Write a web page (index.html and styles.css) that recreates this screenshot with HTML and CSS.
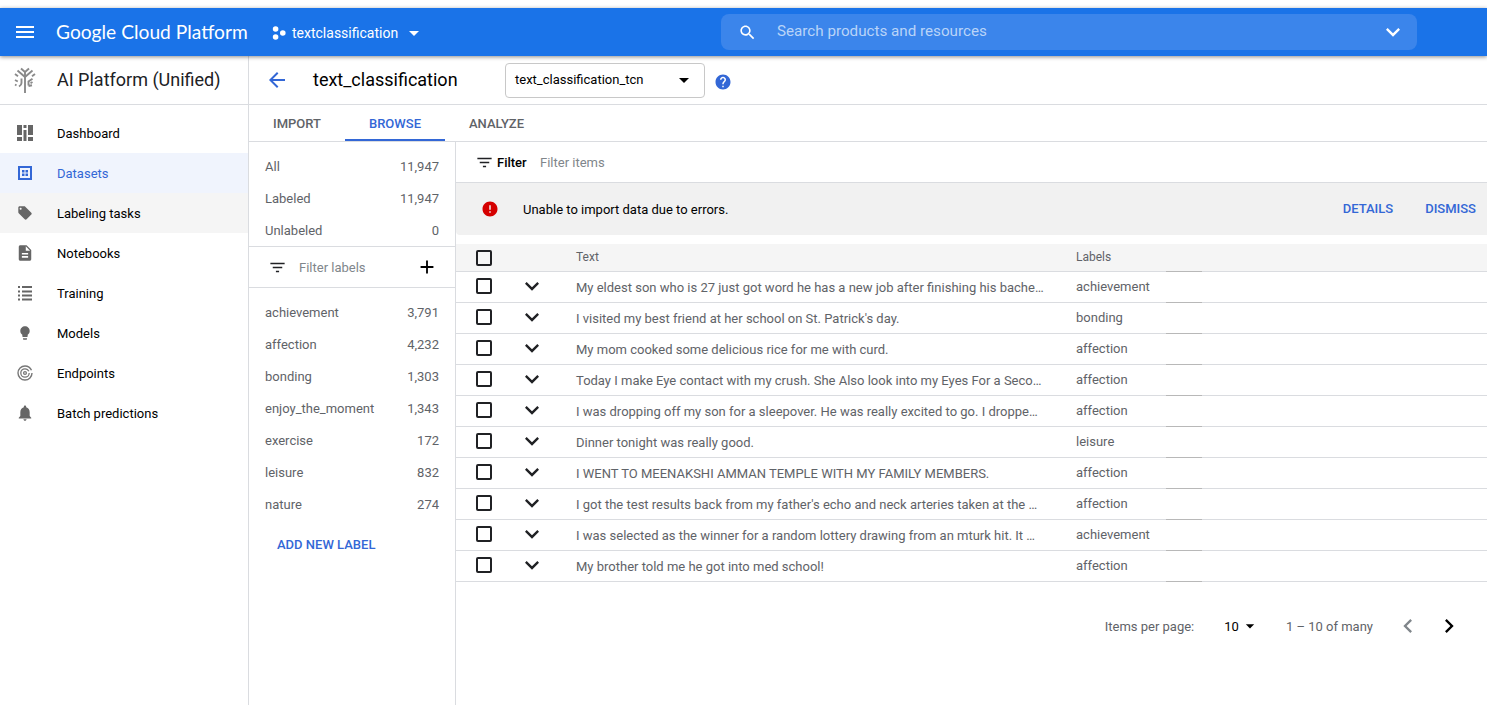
FILE: index.html
```html
<!DOCTYPE html>
<html lang="en">
<head>
<meta charset="utf-8">
<title>AI Platform (Unified)</title>
<link rel="stylesheet" href="styles.css">
</head>
<body>
<svg class="sprite" aria-hidden="true">
<symbol id="i-menu" viewBox="0 0 24 24"><path d="M3 18h18v-2H3v2zm0-5h18v-2H3v2zm0-7v2h18V6H3z"/></symbol>
<symbol id="i-back" viewBox="0 0 24 24"><path d="M20 11H7.83l5.59-5.59L12 4l-8 8 8 8 1.41-1.41L7.83 13H20v-2z"/></symbol>
<symbol id="i-drop" viewBox="0 0 24 24"><path d="M7 10l5 5 5-5z"/></symbol>
<symbol id="i-search" viewBox="0 0 24 24"><path d="M15.5 14h-.79l-.28-.27C15.41 12.59 16 11.11 16 9.5 16 5.91 13.09 3 9.5 3S3 5.91 3 9.5 5.91 16 9.5 16c1.61 0 3.09-.59 4.23-1.57l.27.28v.79l5 4.99L20.49 19l-4.99-5zm-6 0C7.01 14 5 11.99 5 9.5S7.01 5 9.5 5 14 7.01 14 9.5 11.99 14 9.5 14z"/></symbol>
<symbol id="i-help" viewBox="0 0 24 24"><path d="M12 2C6.48 2 2 6.48 2 12s4.48 10 10 10 10-4.48 10-10S17.52 2 12 2zm1 17h-2v-2h2v2zm2.07-7.75l-.9.92C13.45 12.9 13 13.5 13 15h-2v-.5c0-1.1.45-2.1 1.17-2.83l1.24-1.26c.37-.36.59-.86.59-1.41 0-1.1-.9-2-2-2s-2 .9-2 2H8c0-2.21 1.79-4 4-4s4 1.79 4 4c0 .88-.36 1.68-.93 2.25z"/></symbol>
<symbol id="i-filter" viewBox="0 0 24 24"><path d="M10 18h4v-2h-4v2zM3 6v2h18V6H3zm3 7h12v-2H6v2z"/></symbol>
<symbol id="i-add" viewBox="0 0 24 24"><path d="M19 13h-6v6h-2v-6H5v-2h6V5h2v6h6v2z"/></symbol>
<symbol id="i-error" viewBox="0 0 24 24"><path d="M12 2C6.48 2 2 6.48 2 12s4.48 10 10 10 10-4.48 10-10S17.52 2 12 2zm1 15h-2v-2h2v2zm0-4h-2V7h2v6z"/></symbol>
<symbol id="i-more" viewBox="0 0 24 24"><path d="M16.59 8.59L12 13.17 7.41 8.59 6 10l6 6 6-6z"/></symbol>
<symbol id="i-left" viewBox="0 0 24 24"><path d="M15.41 7.41L14 6l-6 6 6 6 1.41-1.41L10.83 12z"/></symbol>
<symbol id="i-right" viewBox="0 0 24 24"><path d="M10 6L8.59 7.41 13.17 12l-4.58 4.59L10 18l6-6z"/></symbol>
</svg>

<header class="topbar">
  <svg class="top-menu"><use href="#i-menu"/></svg>
  <span class="brand">Google Cloud Platform</span>
  <div class="project">
    <svg class="project-dots" viewBox="0 0 14 14"><circle cx="3.6" cy="3" r="2.8"/><circle cx="3.6" cy="11" r="2.8"/><circle cx="10.8" cy="7" r="2.8"/></svg>
    <span>textclassification</span>
    <svg class="project-drop"><use href="#i-drop"/></svg>
  </div>
  <div class="search">
    <svg class="search-icon"><use href="#i-search"/></svg>
    <span class="search-text">Search products and resources</span>
    <svg class="search-more"><use href="#i-more"/></svg>
  </div>
</header>

<div class="shell">
  <aside class="sidebar">
    <div class="side-head">
      <svg class="side-logo" viewBox="0 0 22 27" fill="none" stroke="#8a8a8a" stroke-width="1.9">
        <path d="M11 5v22M11 6L7 2.500M11 6l4-3.500M11 11L3.500 4.500M11 11l7.500-6.500M1 8l3 2.200M21 8l-3 2.200"/>
        <path d="M7.500 12.500v4.500q0 2-2.500 3.500M1 14l2.800 1.500M1 18.500l1.500.8M14.500 19.500v-4l4-2.800M18.500 16l-2 1.200M14.500 20l3.500-.8"/>
      </svg>
      <span>AI Platform (Unified)</span>
    </div>
    <nav class="side-nav">
      <a class="nav-item">
        <svg class="nav-icon" viewBox="0 0 24 24"><path d="M4 4h5v10H4zM4 16h5v4H4zM10.500 4h3v3h-3zM10.500 9h3v11h-3zM15 4h5v10h-5zM15 16h5v4h-5z"/></svg>
        <span>Dashboard</span>
      </a>
      <a class="nav-item is-active">
        <svg class="nav-icon" viewBox="0 0 24 24"><path fill-rule="evenodd" d="M5 5h14v14H5zM7 7v10h10V7zM9 9h2.500v2.500H9zM12.500 9H15v2.500h-2.500zM9 12.500h2.500V15H9zM12.500 12.500H15V15h-2.500z"/></svg>
        <span>Datasets</span>
      </a>
      <a class="nav-item is-hover">
        <svg class="nav-icon icon-s" viewBox="0 0 24 24"><path d="M21.41 11.58l-9-9C12.05 2.22 11.55 2 11 2H4c-1.1 0-2 .9-2 2v7c0 .55.22 1.05.59 1.42l9 9c.36.36.86.58 1.41.58.55 0 1.05-.22 1.41-.59l7-7c.37-.36.59-.86.59-1.41 0-.55-.23-1.06-.59-1.42zM5.500 7C4.670 7 4 6.330 4 5.500S4.670 4 5.500 4 7 4.670 7 5.500 6.330 7 5.500 7z"/></svg>
        <span>Labeling tasks</span>
      </a>
      <a class="nav-item">
        <svg class="nav-icon icon-m" viewBox="0 0 24 24"><path d="M14 2H6c-1.1 0-1.99.9-1.99 2L4 20c0 1.1.89 2 1.99 2H18c1.1 0 2-.9 2-2V8l-6-6zm2 16H8v-2h8v2zm0-4H8v-2h8v2zm-3-5V3.500L18.500 9H13z"/></svg>
        <span>Notebooks</span>
      </a>
      <a class="nav-item">
        <svg class="nav-icon" viewBox="0 0 24 24"><path d="M5 5h2v2H5zM9 5h10v2H9zM5 9.500h2v2H5zM9 9.500h10v2H9zM5 13.500h2v2H5zM9 13.500h10v2H9zM5 17.500h2v2H5zM9 17.500h10v2H9z"/></svg>
        <span>Training</span>
      </a>
      <a class="nav-item">
        <svg class="nav-icon icon-s" viewBox="0 0 24 24"><path d="M9 21c0 .55.45 1 1 1h4c.55 0 1-.45 1-1v-1H9v1zm3-19C8.140 2 5 5.140 5 9c0 2.380 1.190 4.470 3 5.740V17c0 .55.45 1 1 1h6c.55 0 1-.45 1-1v-2.260c1.810-1.270 3-3.360 3-5.740 0-3.860-3.140-7-7-7z"/></svg>
        <span>Models</span>
      </a>
      <a class="nav-item">
        <svg class="nav-icon ring" viewBox="0 0 24 24"><circle cx="12" cy="12" r="7" stroke-width="1.400" stroke-dasharray="41 3"/><circle cx="12" cy="12" r="4.200" stroke-width="1.300" stroke-dasharray="24 2.400"/><circle cx="12" cy="12" r="1.400" stroke-width="1.300"/></svg>
        <span>Endpoints</span>
      </a>
      <a class="nav-item">
        <svg class="nav-icon icon-m" viewBox="0 0 24 24"><path d="M12 22c1.1 0 2-.9 2-2h-4c0 1.1.89 2 2 2zm6-6v-5c0-3.07-1.64-5.64-4.5-6.32V4c0-.83-.67-1.5-1.5-1.5s-1.5.67-1.5 1.5v.68C7.630 5.360 6 7.920 6 11v5l-2 2v1h16v-1l-2-2z"/></svg>
        <span>Batch predictions</span>
      </a>
    </nav>
  </aside>

  <main class="content">
    <div class="title-row">
      <svg class="back"><use href="#i-back"/></svg>
      <h1 class="title">text_classification</h1>
      <div class="select">
        <span>text_classification_tcn</span>
        <svg class="select-drop"><use href="#i-drop"/></svg>
      </div>
      <svg class="help"><use href="#i-help"/></svg>
    </div>

    <div class="tabs">
      <span class="tab">IMPORT</span>
      <span class="tab is-current">BROWSE</span>
      <span class="tab">ANALYZE</span>
    </div>

    <div class="browse">
      <section class="facets">
        <div class="facet-group stats">
          <div class="facet"><span>All</span><span>11,947</span></div>
          <div class="facet"><span>Labeled</span><span>11,947</span></div>
          <div class="facet"><span>Unlabeled</span><span>0</span></div>
        </div>
        <div class="label-filter">
          <svg class="lf-icon"><use href="#i-filter"/></svg>
          <span class="lf-text">Filter labels</span>
          <svg class="lf-add"><use href="#i-add"/></svg>
        </div>
        <div class="facet-group labels">
          <div class="facet"><span>achievement</span><span>3,791</span></div>
          <div class="facet"><span>affection</span><span>4,232</span></div>
          <div class="facet"><span>bonding</span><span>1,303</span></div>
          <div class="facet"><span>enjoy_the_moment</span><span>1,343</span></div>
          <div class="facet"><span>exercise</span><span>172</span></div>
          <div class="facet"><span>leisure</span><span>832</span></div>
          <div class="facet"><span>nature</span><span>274</span></div>
        </div>
        <a class="add-label">ADD NEW LABEL</a>
      </section>

      <section class="items">
        <div class="filter-row">
          <svg class="fr-icon"><use href="#i-filter"/></svg>
          <span class="fr-label">Filter</span>
          <span class="fr-text">Filter items</span>
        </div>
        <div class="banner">
          <svg class="banner-icon"><use href="#i-error"/></svg>
          <span class="banner-text">Unable to import data due to errors.</span>
          <a class="banner-link">DETAILS</a>
          <a class="banner-link">DISMISS</a>
        </div>
        <div class="table">
          <div class="row row-head">
            <span class="cell-check"><i class="box"></i></span>
            <span class="cell-exp"></span>
            <span class="cell-text">Text</span>
            <span class="cell-label">Labels</span>
            <span class="cell-grip"></span>
          </div>
          <div class="row"><span class="cell-check"><i class="box"></i></span><span class="cell-exp"><svg class="exp"><use href="#i-more"/></svg></span><span class="cell-text">My eldest son who is 27 just got word he has a new job after finishing his bache…</span><span class="cell-label">achievement</span><span class="cell-grip"></span></div>
          <div class="row"><span class="cell-check"><i class="box"></i></span><span class="cell-exp"><svg class="exp"><use href="#i-more"/></svg></span><span class="cell-text">I visited my best friend at her school on St. Patrick's day.</span><span class="cell-label">bonding</span><span class="cell-grip"></span></div>
          <div class="row"><span class="cell-check"><i class="box"></i></span><span class="cell-exp"><svg class="exp"><use href="#i-more"/></svg></span><span class="cell-text">My mom cooked some delicious rice for me with curd.</span><span class="cell-label">affection</span><span class="cell-grip"></span></div>
          <div class="row"><span class="cell-check"><i class="box"></i></span><span class="cell-exp"><svg class="exp"><use href="#i-more"/></svg></span><span class="cell-text">Today I make Eye contact with my crush. She Also look into my Eyes For a Seco…</span><span class="cell-label">affection</span><span class="cell-grip"></span></div>
          <div class="row"><span class="cell-check"><i class="box"></i></span><span class="cell-exp"><svg class="exp"><use href="#i-more"/></svg></span><span class="cell-text">I was dropping off my son for a sleepover. He was really excited to go. I droppe…</span><span class="cell-label">affection</span><span class="cell-grip"></span></div>
          <div class="row"><span class="cell-check"><i class="box"></i></span><span class="cell-exp"><svg class="exp"><use href="#i-more"/></svg></span><span class="cell-text">Dinner tonight was really good.</span><span class="cell-label">leisure</span><span class="cell-grip"></span></div>
          <div class="row"><span class="cell-check"><i class="box"></i></span><span class="cell-exp"><svg class="exp"><use href="#i-more"/></svg></span><span class="cell-text">I WENT TO MEENAKSHI AMMAN TEMPLE WITH MY FAMILY MEMBERS.</span><span class="cell-label">affection</span><span class="cell-grip"></span></div>
          <div class="row"><span class="cell-check"><i class="box"></i></span><span class="cell-exp"><svg class="exp"><use href="#i-more"/></svg></span><span class="cell-text">I got the test results back from my father's echo and neck arteries taken at the …</span><span class="cell-label">affection</span><span class="cell-grip"></span></div>
          <div class="row"><span class="cell-check"><i class="box"></i></span><span class="cell-exp"><svg class="exp"><use href="#i-more"/></svg></span><span class="cell-text">I was selected as the winner for a random lottery drawing from an mturk hit. It …</span><span class="cell-label">achievement</span><span class="cell-grip"></span></div>
          <div class="row"><span class="cell-check"><i class="box"></i></span><span class="cell-exp"><svg class="exp"><use href="#i-more"/></svg></span><span class="cell-text">My brother told me he got into med school!</span><span class="cell-label">affection</span><span class="cell-grip"></span></div>
        </div>
        <div class="pager">
          <span class="pg-label">Items per page:</span>
          <span class="pg-size">10</span>
          <svg class="pg-drop"><use href="#i-drop"/></svg>
          <span class="pg-range">1 – 10 of many</span>
          <svg class="pg-prev"><use href="#i-left"/></svg>
          <svg class="pg-next"><use href="#i-right"/></svg>
        </div>
      </section>
    </div>
  </main>
</div>
</body>
</html>
```

FILE: styles.css
```css
* { box-sizing: border-box; }
html, body { margin: 0; height: 705px; overflow: hidden; }
body {
  padding-top: 8px;
  background: #fff;
  color: #202124;
  font-family: Roboto, "Liberation Sans", sans-serif;
  font-size: 13px;
}
.sprite { display: none; }
svg { display: block; flex: none; }

/* top bar */
.topbar {
  position: relative;
  z-index: 2;
  display: flex;
  align-items: center;
  height: 48px;
  background: #1a73e8;
  color: #fff;
  box-shadow: 0 1px 4px rgba(0, 0, 0, .45);
  fill: #fff;
}
.top-menu { width: 24px; height: 24px; margin-left: 13px; }
.brand { width: 216px; margin-left: 19px; padding-bottom: 2px; font-family: Lato, Roboto, sans-serif; font-size: 19.2px; white-space: nowrap; }
.project { display: flex; align-items: center; width: 449px; padding-top: 2px; font-size: 14px; }
.project-dots { width: 14px; height: 14px; margin-right: 6px; }
.project-drop { width: 24px; height: 24px; margin-left: 4px; }
.search {
  display: flex;
  align-items: center;
  width: 696px;
  height: 36px;
  border-radius: 8px;
  background: #3b85eb;
}
.search-icon { width: 19px; height: 19px; margin-left: 17px; }
.search-text { flex: 1; margin-left: 20px; padding-bottom: 2px; font-size: 15.2px; color: #b9d4f8; }
.search-more { width: 28px; height: 28px; margin-right: 10px; }

/* shell */
.shell { display: flex; height: 649px; }
.sidebar { flex: none; width: 249px; border-right: 1px solid #dadce0; }
.side-head {
  display: flex;
  align-items: center;
  height: 49px;
  padding-bottom: 2px;
  border-bottom: 1px solid #dadce0;
  font-size: 18px;
  color: #202124;
}
.side-logo { width: 22px; height: 27px; margin: 1px 21px 0 14px; }
.side-nav { padding-top: 8px; }
.nav-item {
  display: flex;
  align-items: center;
  height: 40px;
  padding-left: 13px;
  color: #000;
  fill: #666;
}
.nav-icon { width: 24px; height: 24px; margin-right: 20px; }
.icon-s { transform: scale(.67); }
.icon-m { transform: scale(.78); }
.ring { fill: none; stroke: #777; }
.is-active { background: #f0f4fd; color: #3367d6; fill: #3367d6; }
.is-hover { background: #f5f5f5; }

/* content */
.content { flex: 1; min-width: 0; }
.title-row {
  display: flex;
  align-items: center;
  height: 49px;
  border-bottom: 1px solid #dadce0;
}
.back { width: 24px; height: 24px; margin-left: 16px; fill: #3367d6; }
.title { width: 192px; margin: 0 0 0 24px; padding-bottom: 2px; font-size: 18px; font-weight: 400; color: #000; }
.select {
  display: flex;
  align-items: center;
  justify-content: space-between;
  width: 200px;
  height: 35px;
  padding: 0 8px 2px 9px;
  margin-top: 1px;
  border: 1px solid #c8c8c8;
  border-radius: 4px;
  color: #000;
  fill: #000;
}
.select-drop { width: 24px; height: 24px; }
.help { width: 18px; height: 18px; margin: 3px 0 0 9px; fill: #3367d6; }

.tabs { display: flex; height: 37px; border-bottom: 1px solid #dadce0; }
.tab {
  display: flex;
  align-items: center;
  justify-content: center;
  width: 103px;
  height: 36px;
  font-weight: 500;
  font-size: 13px;
  color: #5f6368;
}
.tab:first-child { width: 96px; }
.tab.is-current { width: 100px; color: #3367d6; border-bottom: 2px solid #3367d6; padding-top: 2px; }

.browse { display: flex; height: 564px; }

/* facets */
.facets { flex: none; width: 207px; border-right: 1px solid #dadce0; }
.facet-group { padding: 0 16px; color: #5f6368; }
.stats { padding-top: 8px; height: 105px; border-bottom: 1px solid #dadce0; }
.facet { display: flex; justify-content: space-between; align-items: center; height: 32px; }
.label-filter {
  display: flex;
  align-items: center;
  height: 41px;
  padding: 0 16px 0 19px;
  border-bottom: 1px solid #dadce0;
  color: #80868b;
}
.lf-icon { width: 19px; height: 19px; margin-right: 12px; fill: #202124; }
.lf-text { flex: 1; }
.lf-add { width: 22px; height: 22px; fill: #000; margin-right: 1px; }
.labels { padding-top: 8px; }
.add-label {
  display: block;
  margin: 17px 0 0 28px;
  color: #3367d6;
  font-weight: 500;
}

/* items */
.items { flex: 1; min-width: 0; }
.filter-row { display: flex; align-items: center; height: 41px; padding-left: 19px; border-bottom: 1px solid #dadce0; }
.fr-icon { width: 19px; height: 19px; margin-right: 3px; fill: #202124; }
.fr-label { width: 43px; font-weight: 500; color: #000; }
.fr-text { color: #80868b; }
.banner {
  display: flex;
  align-items: center;
  height: 52px;
  background: #f1f1f1;
  border-radius: 0 0 0 4px;
  padding-right: 11px;
}
.banner-icon { width: 18px; height: 18px; margin-left: 25px; fill: #d50000; }
.banner-text { flex: 1; margin-left: 24px; color: #000; }
.banner-link { margin-left: 32px; padding-bottom: 2px; color: #3367d6; font-weight: 500; }

.table { margin-top: 9px; }
.row {
  display: grid;
  grid-template-columns: 56px 64px 500px 90px 36px;
  grid-template-rows: 100%;
  height: 31px;
  border-bottom: 1px solid #dadce0;
  color: #5f6368;
}
.row-head { height: 28px; background: #f5f5f5; font-size: 12px; }
.row > span { display: flex; align-items: center; white-space: nowrap; }
.cell-check { padding: 0 0 2px 20px; }
.row-head > .cell-check { padding-bottom: 0; }
.box { display: block; width: 16px; height: 16px; border: 2px solid #202124; border-radius: 2px; }
.row-head > .cell-text { padding-bottom: 2px; }
.row > .cell-label { padding-bottom: 2px; }
.exp { width: 28px; height: 28px; margin: -3px 0 0 6px; fill: #202124; }
.row > .cell-grip { height: 31px; align-self: start; border-bottom: 1px solid #b8b8b8; }
.row-head > .cell-grip { height: 28px; }

.pager { display: flex; align-items: center; justify-content: flex-end; height: 88px; padding-right: 24px; color: #5f6368; }
.pg-size { margin-left: 30px; color: #000; }
.pg-drop { width: 20px; height: 20px; margin-left: 1px; fill: #000; }
.pg-range { margin-left: 26px; }
.pg-prev { width: 28px; height: 28px; margin-left: 21px; fill: #80868b; }
.pg-next { width: 28px; height: 28px; margin-left: 13px; fill: #000; }
```
